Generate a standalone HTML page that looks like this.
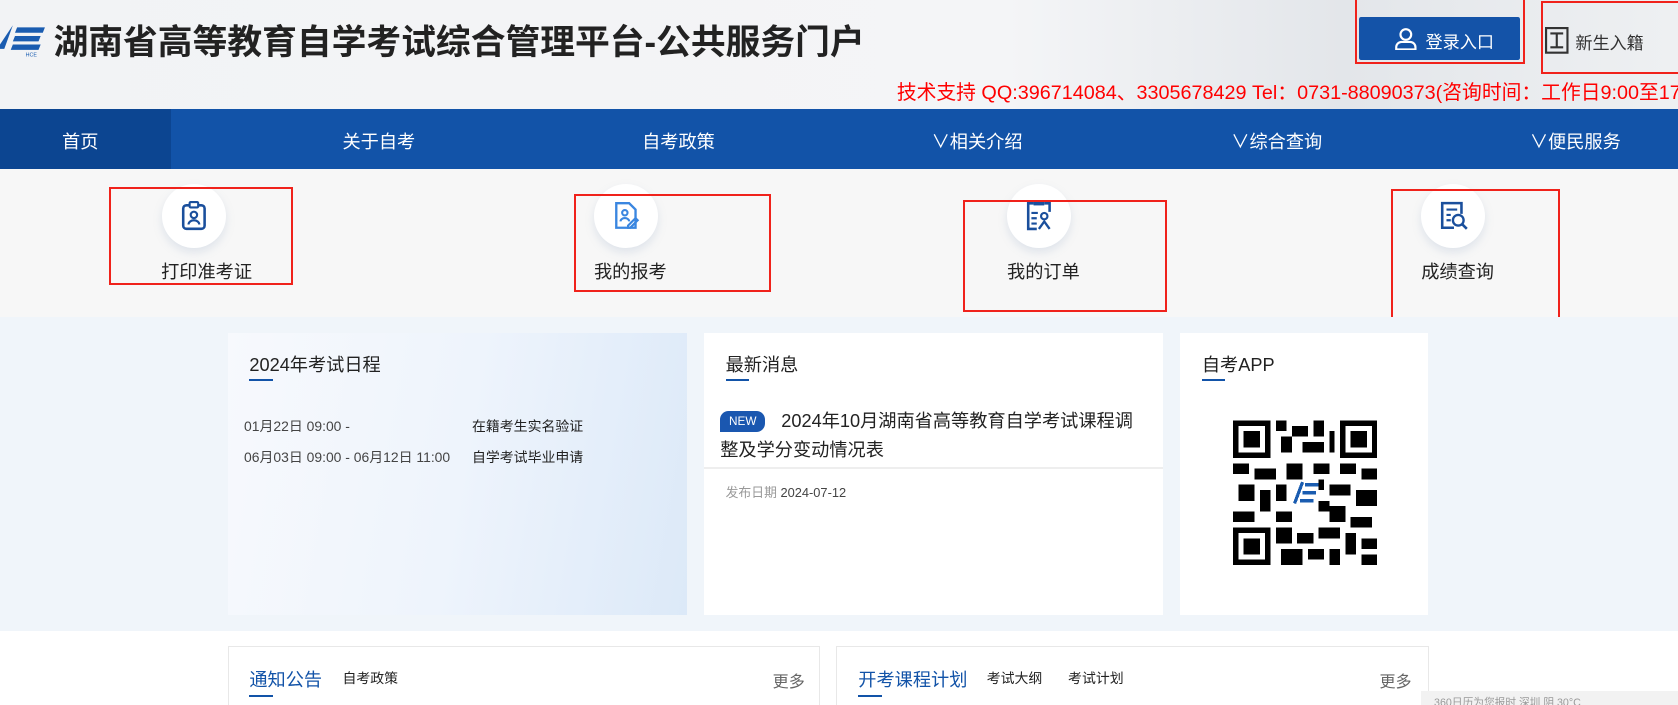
<!DOCTYPE html>
<html><head><meta charset="utf-8">
<style>
html,body{margin:0;padding:0;overflow:hidden;width:1678px;height:705px;background:#fff}
#w{zoom:1.0702;width:1568px;height:659px;position:relative;font-family:"Liberation Sans","Noto Sans CJK SC",sans-serif;overflow:hidden}
.a{position:absolute}
.hdr{left:0;top:0;width:1568px;height:102px;background:linear-gradient(90deg,#f2f3f5 0%,#f4f5f7 60%,#e3e6ea 80%,#eef0f2 100%)}
.nav{left:0;top:102px;width:1568px;height:56px;background:#1253a8;color:#fff;font-size:17px}
.nav span{position:absolute;top:18px;transform:translateX(-50%);white-space:nowrap}
.quick{left:0;top:158px;width:1568px;height:138px;background:#f7f7f7}
.circ{width:60px;height:60px;border-radius:50%;background:#fff;box-shadow:0 4px 8px rgba(150,170,200,.25)}
.lbl{font-size:17px;color:#222;transform:translateX(-50%);white-space:nowrap}
.rb{border:2px solid #f0221b}
.mid{left:0;top:296px;width:1568px;height:294px;background:#f0f5fa}
.card{background:#fff}
.ct{font-size:17px;color:#222}
.bar{width:22px;height:2px;background:#1253a8}
</style></head><body><div id="w">
<div class="a hdr"></div>
<svg class="a" style="left:0;top:20px" width="46" height="34" viewBox="0 0 46 34"><path d="M12 4 L4 26 L0 26 L0 22 Z" fill="#1a5cb0"/><path d="M16 6h26l-2 5H14zM14 14h24l-2 5H12zM12 22h26l-2 5H10z" fill="#1a5cb0"/><text x="24" y="33" font-size="5" fill="#1a5cb0" font-family="Liberation Sans">HCE</text></svg>
<div class="a" style="left:50px;top:14px;font-size:32.5px;font-weight:bold;color:#222;white-space:nowrap">湖南省高等教育自学考试综合管理平台-公共服务门户</div>
<div class="a" style="left:1270px;top:16px;width:150px;height:40px;background:#1453a8;border-radius:2px;color:#fff;font-size:16px"><svg class="a" style="left:32px;top:9px" width="24" height="22" viewBox="0 0 24 22"><circle cx="12" cy="7" r="5" fill="none" stroke="#fff" stroke-width="2"/><path d="M3 21v-2a5 5 0 0 1 5-5h8a5 5 0 0 1 5 5v2z" fill="none" stroke="#fff" stroke-width="2"/></svg><span class="a" style="left:62px;top:10px">登录入口</span></div>
<div class="a rb" style="left:1266px;top:-2px;width:155px;height:58px"></div>
<svg class="a" style="left:1444px;top:25px" width="22" height="25" viewBox="0 0 22 25"><rect x="1" y="1" width="20" height="23" fill="none" stroke="#333" stroke-width="2"/><path d="M5 6h12M11 6v13M5 19h12" stroke="#333" stroke-width="2"/></svg>
<div class="a" style="left:1472px;top:27px;font-size:16px;color:#333">新生入籍</div>
<div class="a rb" style="left:1440px;top:1px;width:126px;height:64px"></div>
<div class="a" style="left:838px;top:71px;font-size:18.5px;color:#f00;white-space:nowrap">技术支持 QQ:396714084、3305678429 Tel：0731-88090373(咨询时间：工作日9:00至17:00)</div>
<div class="a nav"><div class="a" style="left:0;top:0;width:160px;height:56px;background:#0c4591"></div><span style="left:75px">首页</span><span style="left:354px">关于自考</span><span style="left:634px">自考政策</span><span style="left:913px">∨相关介绍</span><span style="left:1193px">∨综合查询</span><span style="left:1472px">∨便民服务</span></div>
<div class="a quick"></div>
<div class="a circ" style="left:151px;top:172px"></div>
<svg class="a" style="left:168px;top:188px" width="26" height="28" viewBox="0 0 26 28"><rect x="3" y="4" width="20" height="22" rx="3" fill="none" stroke="#1a4f9c" stroke-width="2.4"/><rect x="9" y="1" width="8" height="5" rx="1" fill="#fff" stroke="#1a4f9c" stroke-width="2"/><circle cx="13" cy="13" r="3" fill="none" stroke="#1a4f9c" stroke-width="2"/><path d="M8 22a5 4 0 0 1 10 0" fill="none" stroke="#1a4f9c" stroke-width="2"/></svg>
<div class="a lbl" style="left:193px;top:241px">打印准考证</div>
<div class="a rb" style="left:102px;top:175px;width:168px;height:88px"></div>
<div class="a circ" style="left:555px;top:172px"></div>
<svg class="a" style="left:572px;top:188px" width="26" height="28" viewBox="0 0 26 28"><path d="M4 2h12l6 6v17H4z" fill="none" stroke="#3a86e0" stroke-width="2.2"/><circle cx="12" cy="11" r="2.5" fill="none" stroke="#3a86e0" stroke-width="2"/><path d="M8 19a4 3 0 0 1 8 0M15 23l7-7 2 2-7 7h-2z" fill="none" stroke="#3a86e0" stroke-width="2"/></svg>
<div class="a lbl" style="left:589px;top:241px">我的报考</div>
<div class="a rb" style="left:536px;top:181px;width:181px;height:88px"></div>
<div class="a circ" style="left:941px;top:172px"></div>
<svg class="a" style="left:958px;top:186px" width="26" height="30" viewBox="0 0 26 30"><path d="M8 4H3v24h8M18 4h5v8" fill="none" stroke="#1a4f9c" stroke-width="2.4"/><rect x="8" y="1" width="10" height="5" fill="#1a4f9c"/><path d="M6 13h6M6 18h5M6 23h5" stroke="#1a4f9c" stroke-width="2"/><circle cx="18" cy="16" r="3" fill="none" stroke="#1a4f9c" stroke-width="2"/><path d="M13 28l5-7 5 7" fill="none" stroke="#1a4f9c" stroke-width="2.2"/></svg>
<div class="a lbl" style="left:975px;top:241px">我的订单</div>
<div class="a rb" style="left:900px;top:187px;width:187px;height:101px"></div>
<div class="a circ" style="left:1328px;top:172px"></div>
<svg class="a" style="left:1345px;top:188px" width="28" height="28" viewBox="0 0 28 28"><path d="M14 25H3V2h18v10" fill="none" stroke="#1a4f9c" stroke-width="2.4"/><path d="M7 8h10M7 13h4M7 18h4" stroke="#1a4f9c" stroke-width="2"/><circle cx="18" cy="18" r="5" fill="none" stroke="#1a4f9c" stroke-width="2.2"/><path d="M22 22l4 4" stroke="#1a4f9c" stroke-width="2.4"/></svg>
<div class="a lbl" style="left:1362px;top:241px">成绩查询</div>
<div class="a rb" style="left:1300px;top:177px;width:154px;height:122px"></div>
<div class="a mid"></div>
<div class="a" style="left:213px;top:311px;width:429px;height:264px;background:linear-gradient(100deg,#f7f9fd 0%,#eef4fc 50%,#dce9f8 100%)"></div>
<div class="a ct" style="left:233px;top:328px">2024年考试日程</div><div class="a bar" style="left:233px;top:354px"></div>
<div class="a" style="left:228px;top:389px;font-size:13px;color:#444">01月22日 09:00 -</div>
<div class="a" style="left:441px;top:389px;font-size:13px;color:#222">在籍考生实名验证</div>
<div class="a" style="left:228px;top:418px;font-size:13px;color:#444">06月03日 09:00 - 06月12日 11:00</div>
<div class="a" style="left:441px;top:418px;font-size:13px;color:#222">自学考试毕业申请</div>
<div class="a card" style="left:658px;top:311px;width:429px;height:264px"></div>
<div class="a ct" style="left:678px;top:328px">最新消息</div><div class="a bar" style="left:678px;top:354px"></div>
<div class="a" style="left:673px;top:384px;width:42px;height:20px;background:#1a57b0;border-radius:8px 8px 8px 0;color:#fff;font-size:11px;text-align:center;line-height:20px">NEW</div>
<div class="a" style="left:673px;top:380px;width:395px;font-size:17px;line-height:27px;color:#222;text-indent:57px">2024年10月湖南省高等教育自学考试课程调整及学分变动情况表</div>
<div class="a" style="left:658px;top:436px;width:429px;height:2px;background:#eee"></div>
<div class="a" style="left:678px;top:450px;font-size:12px;color:#999">发布日期 <span style="color:#444">2024-07-12</span></div>
<div class="a card" style="left:1103px;top:311px;width:231px;height:264px"></div>
<div class="a ct" style="left:1123px;top:328px">自考APP</div><div class="a bar" style="left:1123px;top:354px"></div>
<svg class="a" style="left:1152px;top:392px" width="135" height="136" viewBox="0 0 27 27" shape-rendering="crispEdges"><rect width="27" height="27" fill="#fff"/><g fill="#000"><path d="M0 0h7v7H0zM20 0h7v7h-7zM0 20h7v7H0z"/></g><g fill="#fff"><path d="M1 1h5v5H1zM21 1h5v5h-5zM1 21h5v5H1z"/></g><g fill="#000"><path d="M2 2h3v3H2zM22 2h3v3h-3zM2 22h3v3H2zM8 0h2v2H8zM11 1h3v2h-3zM15 0h2v3h-2zM9 3h2v3H9zM13 4h4v2h-4zM18 2h1v4h-1zM0 8h3v2H0zM4 9h4v2H4zM10 8h3v3h-3zM15 8h3v2h-3zM20 8h3v2h-3zM24 9h3v2h-3zM1 12h3v3H1zM5 13h2v4H5zM18 12h4v2h-4zM23 13h4v3h-4zM0 17h4v2H0zM8 17h3v2H8zM18 16h3v3h-3zM22 18h4v2h-4zM8 20h3v3H8zM12 21h3v2h-3zM16 20h4v2h-4zM21 21h2v4h-2zM24 22h3v2h-3zM9 24h4v3H9zM14 24h3v2h-3zM18 24h2v3h-2zM24 25h3v2h-3zM16 11h1v2h-1zM8 12h2v3H8zM16 15h2v2h-2z"/></g><path d="M11 11h5v5h-5z" fill="#fff"/><path d="M13 11.5l-1.5 4M13.5 12h2.5M13 13.5h2.5M12.5 15h2.5" stroke="#1a5cb0" stroke-width=".6"/></svg>
<div class="a card" style="left:213px;top:604px;width:551px;height:60px;border:1px solid #e8e8e8"></div>
<div class="a" style="left:233px;top:622px;font-size:17px;color:#1253a8">通知公告</div>
<div class="a" style="left:320px;top:624px;font-size:13px;color:#222">自考政策</div>
<div class="a" style="left:722px;top:624px;font-size:15px;color:#666">更多</div>
<div class="a bar" style="left:233px;top:649px"></div>
<div class="a card" style="left:781px;top:604px;width:552px;height:60px;border:1px solid #e8e8e8"></div>
<div class="a" style="left:802px;top:622px;font-size:17px;color:#1253a8">开考课程计划</div>
<div class="a" style="left:922px;top:624px;font-size:13px;color:#222">考试大纲</div>
<div class="a" style="left:998px;top:624px;font-size:13px;color:#222">考试计划</div>
<div class="a" style="left:1289px;top:624px;font-size:15px;color:#666">更多</div>
<div class="a bar" style="left:802px;top:649px"></div>
<div class="a" style="left:1328px;top:646px;width:240px;height:20px;background:#f2f2f2;font-size:10px;color:#999;padding:3px 12px">360日历为您报时 深圳 阴 30°C</div>
</div></body></html>
